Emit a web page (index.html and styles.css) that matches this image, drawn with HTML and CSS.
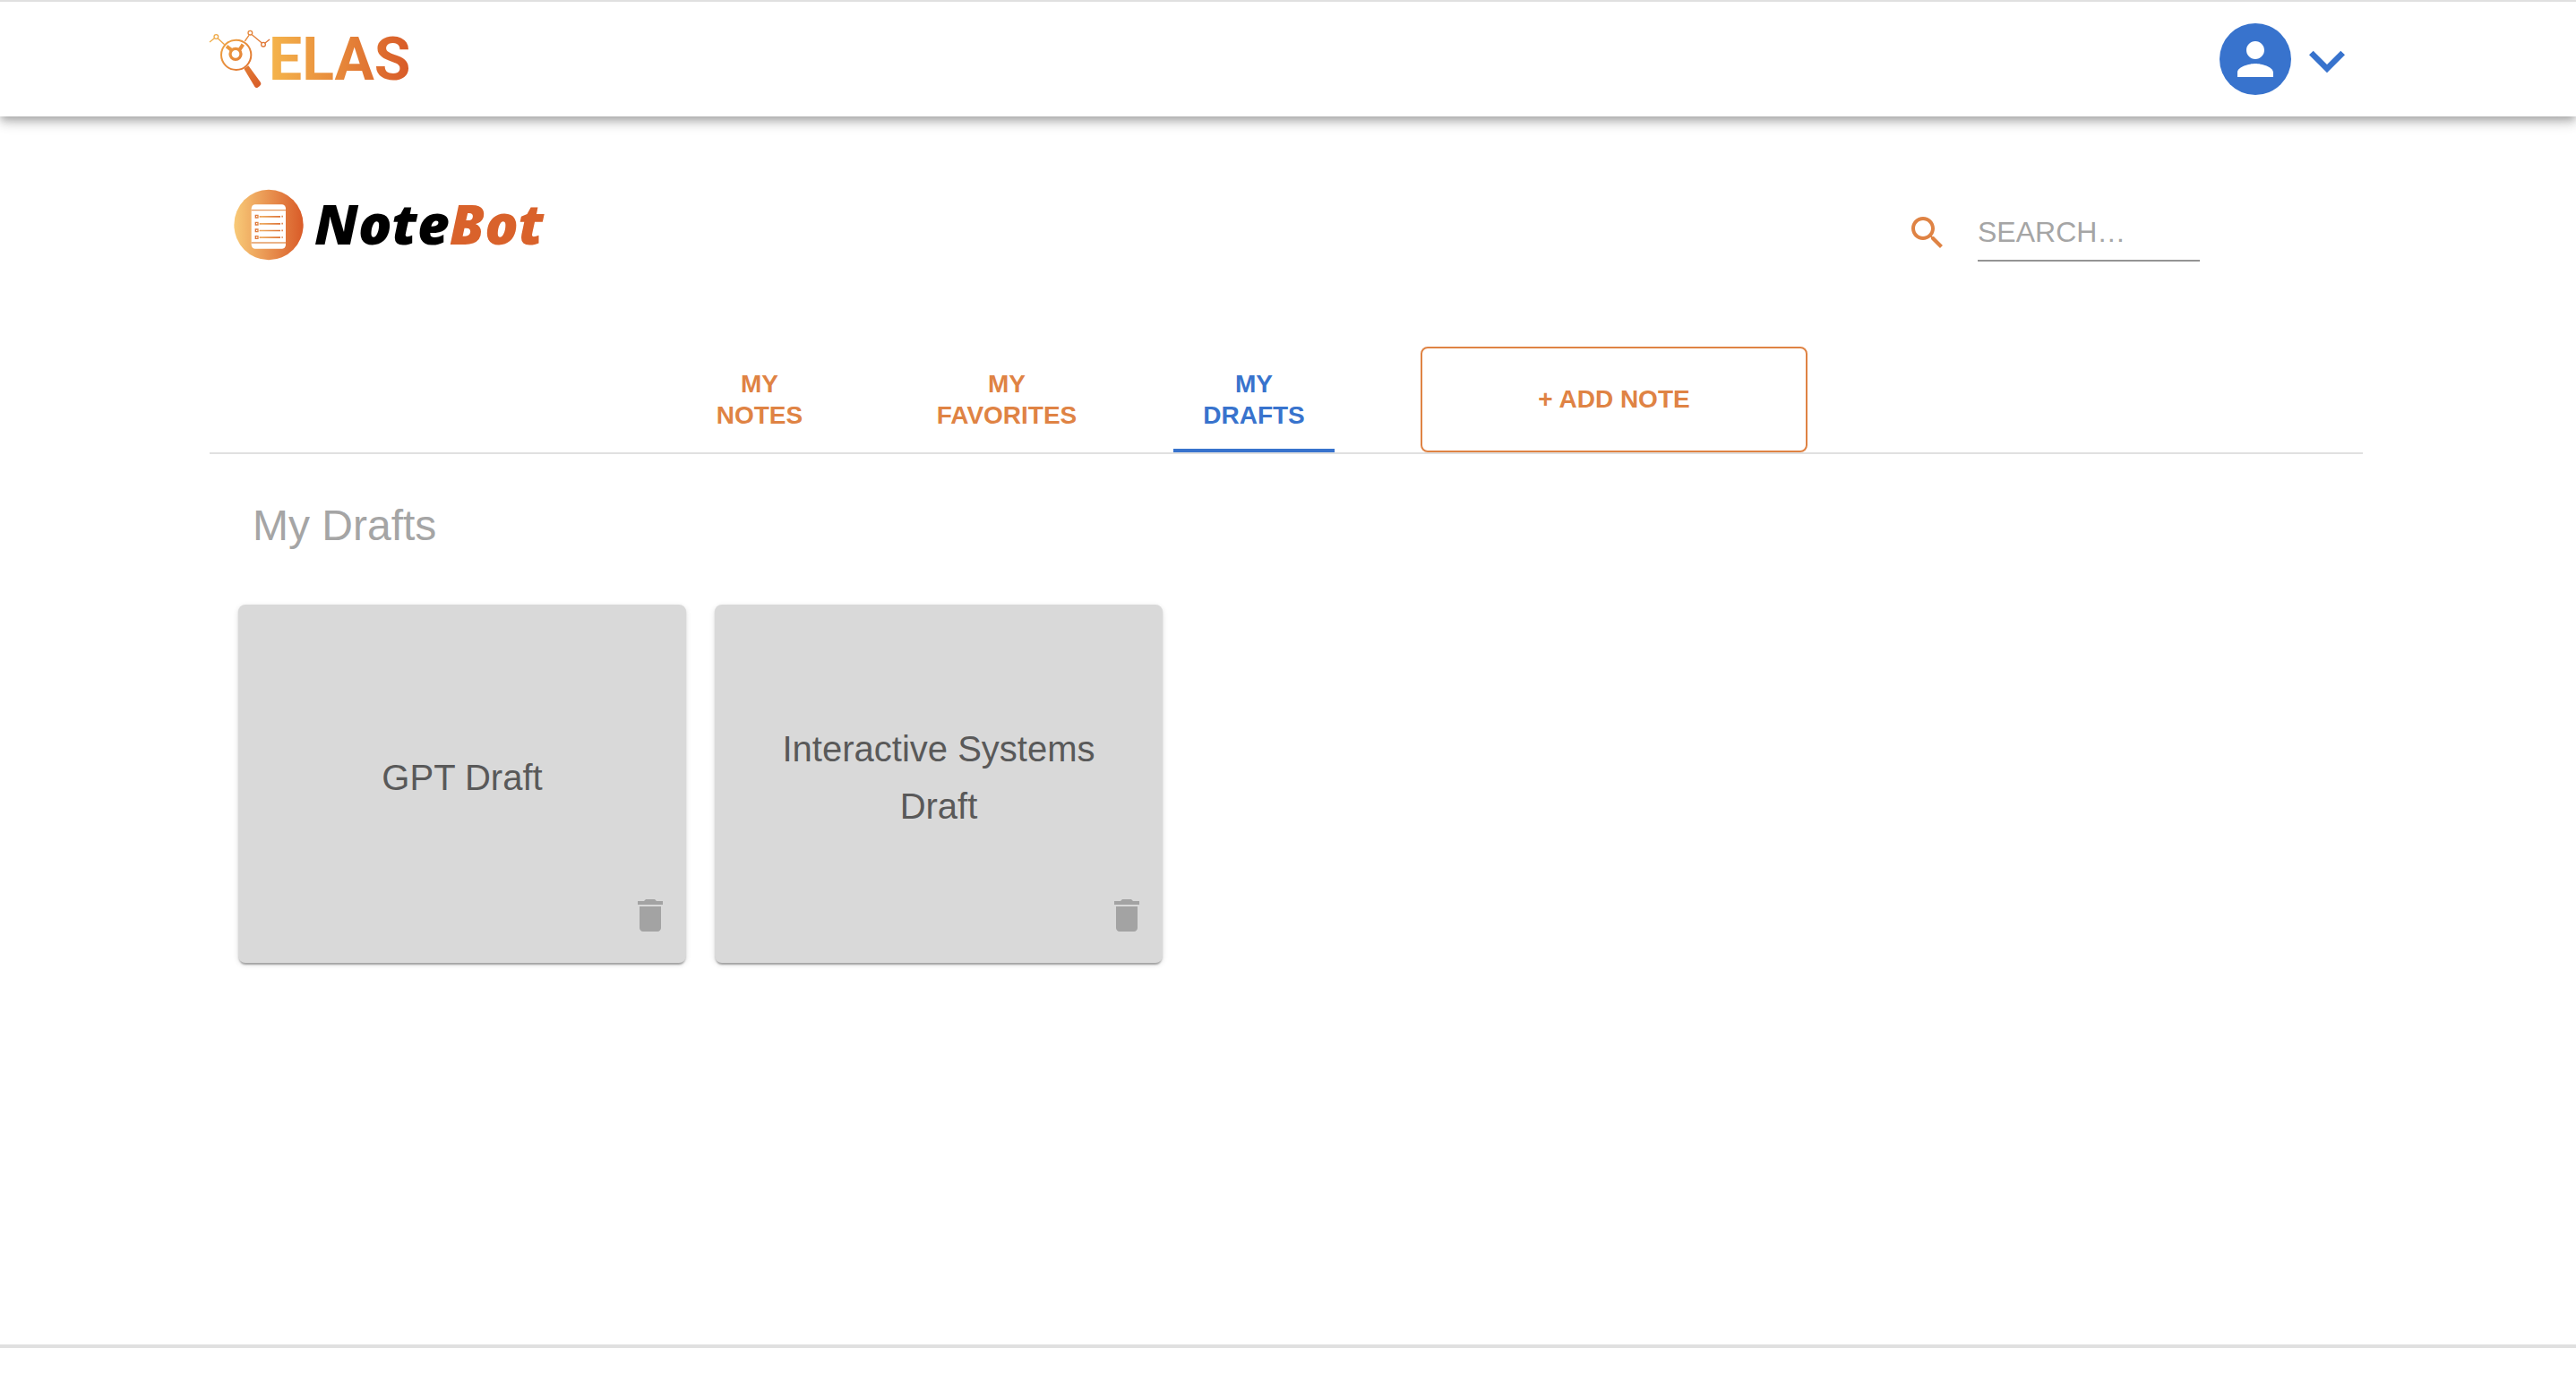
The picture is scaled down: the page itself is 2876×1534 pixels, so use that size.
FILE: index.html
```html
<!DOCTYPE html>
<html lang="en">
<head>
<meta charset="utf-8">
<title>NoteBot - My Drafts</title>
<link rel="stylesheet" href="styles.css">
</head>
<body>
<header class="topbar">
  <div class="container topbar-inner">
    <a class="elas" href="#" aria-label="ELAS home">
      <svg class="elas-mark" viewBox="42 96 198 204" fill="none" aria-hidden="true">
        <defs>
          <linearGradient id="elas-line" gradientUnits="userSpaceOnUse" x1="42" y1="140" x2="243" y2="140">
            <stop offset="0" stop-color="#f0b04a"/><stop offset="1" stop-color="#de7032"/>
          </linearGradient>
          <linearGradient id="elas-glass" gradientUnits="userSpaceOnUse" x1="80" y1="150" x2="215" y2="290">
            <stop offset="0" stop-color="#eea243"/><stop offset="1" stop-color="#d85c29"/>
          </linearGradient>
        </defs>
        <g stroke="url(#elas-line)" stroke-width="4">
          <path d="M42 141 58 128M70 129 92 149M160 138 174 118M184 116 217 144M228 144 243 132"/>
          <circle cx="64" cy="123" r="7"/><circle cx="178" cy="110" r="7"/><circle cx="222" cy="149" r="7"/>
        </g>
        <g stroke="url(#elas-glass)">
          <circle cx="131" cy="184" r="50" stroke-width="6"/>
          <circle cx="129" cy="181" r="18" stroke-width="10"/>
          <path d="M99 155 117 169M154 149 142 167" stroke-width="12"/>
        </g>
        <path d="M157 230 172 220 213 276Q217 282 210 288L203 293Q197 296 193 290Z" fill="url(#elas-glass)"/>
      </svg>
      <span class="elas-name">ELAS</span>
    </a>
    <button class="account" type="button" aria-label="Account menu">
      <span class="avatar">
        <svg viewBox="0 0 24 24" aria-hidden="true"><path fill="currentColor" d="M12 12c2.210 0 4-1.790 4-4s-1.790-4-4-4-4 1.790-4 4 1.790 4 4 4zm0 2c-2.670 0-8 1.340-8 4v2h16v-2c0-2.660-5.330-4-8-4z"/></svg>
      </span>
      <svg class="chevron" viewBox="0 0 24 24" aria-hidden="true"><path fill="currentColor" d="M16.590 8.590 12 13.170 7.410 8.590 6 10l6 6 6-6z"/></svg>
    </button>
  </div>
</header>

<main class="container page">
  <div class="page-head">
    <a class="notebot" href="#" aria-label="NoteBot">
      <svg class="notebot-mark" viewBox="0 0 234 240" aria-hidden="true">
        <defs>
          <linearGradient id="disc"><stop offset="0" stop-color="#f8ca78"/><stop offset="1" stop-color="#d95b28"/></linearGradient>
          <linearGradient id="rule" gradientUnits="userSpaceOnUse" x1="68" y1="0" x2="168" y2="0"><stop offset="0" stop-color="#d9652d"/><stop offset=".25" stop-color="#eda95c"/><stop offset="1" stop-color="#d9652d"/></linearGradient>
        </defs>
        <ellipse cx="117" cy="120" rx="116" ry="118" fill="url(#disc)"/>
        <rect x="59" y="52" width="115" height="148" rx="13" fill="#fff"/>
        <path d="M59 71H174M59 180H174" stroke="#e59a60" stroke-width="4"/>
        <g fill="none" stroke="url(#rule)">
          <path d="M88 92h66v1h-66zM88 116h66v1h-66zM88 139h66v1h-66zM88 162h66v1h-66z" stroke-width="4"/>
          <path d="M73 88h8v8h-8zM73 112h8v8h-8zM73 135h8v8h-8zM73 158h8v8h-8z" stroke-width="4"/>
        </g>
        <path d="M160 92h5M160 116h5M160 139h5M160 162h5" stroke="#e08a55" stroke-width="5"/>
      </svg>
      <span class="notebot-name">Note<span class="accent">Bot</span></span>
    </a>
    <form class="search" role="search">
      <label for="search" aria-label="Search notes">
        <svg viewBox="0 0 24 24" aria-hidden="true"><path fill="currentColor" d="M15.500 14h-.790l-.280-.270C15.410 12.590 16 11.110 16 9.500 16 5.910 13.090 3 9.500 3S3 5.910 3 9.500 5.910 16 9.500 16c1.610 0 3.090-.590 4.230-1.570l.270.280v.790l5 4.990L20.490 19l-4.990-5zm-6 0C7.010 14 5 11.990 5 9.500S7.010 5 9.500 5 14 7.010 14 9.500 11.990 14 9.500 14z"/></svg>
      </label>
      <input id="search" type="text" placeholder="SEARCH…">
    </form>
  </div>

  <nav class="tabs" aria-label="Notes">
    <button class="tab" type="button">MY<br>NOTES</button>
    <button class="tab" type="button">MY<br>FAVORITES</button>
    <button class="tab active" type="button" aria-current="page">MY<br>DRAFTS</button>
    <button class="add-note" type="button">+ ADD NOTE</button>
  </nav>

  <h1 class="title">My Drafts</h1>
  <div class="cards">
    <article class="card">
      <h2 class="card-title">GPT Draft</h2>
      <button class="delete" type="button" aria-label="Delete GPT Draft">
        <svg viewBox="0 0 24 24" aria-hidden="true"><path fill="currentColor" d="M6 19c0 1.100.900 2 2 2h8c1.100 0 2-.900 2-2V7H6v12zM19 4h-3.500l-1-1h-5l-1 1H5v2h14V4z"/></svg>
      </button>
    </article>
    <article class="card">
      <h2 class="card-title">Interactive Systems Draft</h2>
      <button class="delete" type="button" aria-label="Delete Interactive Systems Draft">
        <svg viewBox="0 0 24 24" aria-hidden="true"><path fill="currentColor" d="M6 19c0 1.100.900 2 2 2h8c1.100 0 2-.900 2-2V7H6v12zM19 4h-3.500l-1-1h-5l-1 1H5v2h14V4z"/></svg>
      </button>
    </article>
  </div>
</main>

<footer class="footer"></footer>
</body>
</html>
```

FILE: styles.css
```css
:root {
  --orange: #df8344;
  --blue: #3873cd;
  --muted: #a5a5a5;
  --line: #e0e0e0;
}

* { box-sizing: border-box; }

body {
  margin: 0;
  min-height: 100vh;
  display: flex;
  flex-direction: column;
  background: #fff;
  font-family: "Liberation Sans", Arial, Helvetica, sans-serif;
}

button {
  padding: 0;
  border: 0;
  background: none;
  color: inherit;
  font: inherit;
  cursor: pointer;
}

a { color: inherit; text-decoration: none; }

svg { display: block; }

.container {
  width: 100%;
  max-width: 2408px;
  margin: 0 auto;
  padding-right: 4px;
}

/* Top bar */
.topbar {
  border-top: 2px solid var(--line);
  background: #fff;
  box-shadow: 0 4px 8px -2px rgba(0, 0, 0, .2), 0 8px 10px rgba(0, 0, 0, .14), 0 2px 20px rgba(0, 0, 0, .12);
}

.topbar-inner {
  display: flex;
  align-items: center;
  justify-content: space-between;
  min-height: 128px;
}

.elas { display: flex; align-items: center; }

.elas-mark { width: 66px; height: 68px; overflow: visible; }

.elas-name {
  padding-top: 2px;
  background: linear-gradient(90deg, #f5b54c, #d85a28);
  background-clip: text;
  -webkit-background-clip: text;
  color: transparent;
  font: 700 66px/80px Roboto, sans-serif;
}

.account { display: flex; align-items: center; color: var(--blue); }

.avatar {
  display: grid;
  place-items: center;
  width: 80px;
  height: 80px;
  border-radius: 50%;
  background: var(--blue);
  color: #fff;
}

.avatar svg { width: 60px; height: 60px; }

.chevron { width: 80px; height: 84px; padding-top: 4px; }

/* Page heading row */
.page { flex: 1; }

.page-head {
  display: flex;
  align-items: flex-end;
  justify-content: space-between;
  padding: 81px 182px 95px 27px;
}

.notebot { display: flex; align-items: center; gap: 12px; padding-bottom: 1px; }

.notebot-mark { width: 78px; height: 80px; }

.notebot-name {
  padding-bottom: 4px;
  color: #000;
  font: italic 800 62px/76px "Open Sans", sans-serif;
}

.accent { color: #d9622b; }

.search { display: flex; align-items: center; gap: 32px; }

.search label { color: var(--orange); }

.search svg { width: 48px; height: 48px; }

.search input {
  width: 248px;
  height: 64px;
  padding: 0;
  border: 0;
  border-bottom: 2px solid #949494;
  outline: 0;
  background: none;
  font: 32px/40px "Liberation Sans", Arial, sans-serif;
}

.search input::placeholder { color: var(--muted); opacity: 1; }

/* Tabs */
.tabs {
  display: flex;
  justify-content: center;
  gap: 96px;
  padding-right: 96px;
  border-bottom: 2px solid var(--line);
  color: var(--orange);
  font-size: 28px;
  font-weight: 700;
  line-height: 35px;
}

.tab { width: 180px; padding: 24px 0; }

.tab.active { color: var(--blue); box-shadow: inset 0 -4px var(--blue); }

.add-note {
  width: 432px;
  padding-bottom: 2px;
  border: 2px solid var(--orange);
  border-radius: 8px;
}

/* Draft cards */
.title {
  margin: 48px 48px 56px;
  color: var(--muted);
  font-size: 48px;
  font-weight: 400;
  line-height: 64px;
}

.cards {
  display: flex;
  flex-wrap: wrap;
  gap: 32px;
  padding: 0 32px 64px;
}

.card {
  display: flex;
  flex-direction: column;
  width: 500px;
  min-height: 400px;
  padding: 62px 16px 29px;
  border-radius: 8px;
  background: #d9d9d9;
  box-shadow: 0 4px 2px -2px rgba(0, 0, 0, .2), 0 2px 2px rgba(0, 0, 0, .14), 0 2px 6px rgba(0, 0, 0, .12);
}

.card-title {
  flex: 1;
  display: grid;
  place-items: center;
  margin: 0;
  padding: 0 32px;
  color: #595959;
  font-size: 40px;
  font-weight: 400;
  line-height: 64px;
  text-align: center;
}

.delete { align-self: flex-end; color: #a3a3a3; }

.delete svg { width: 48px; height: 48px; }

.footer {
  padding-top: 29px;
  border-top: 4px solid var(--line);
}
```
